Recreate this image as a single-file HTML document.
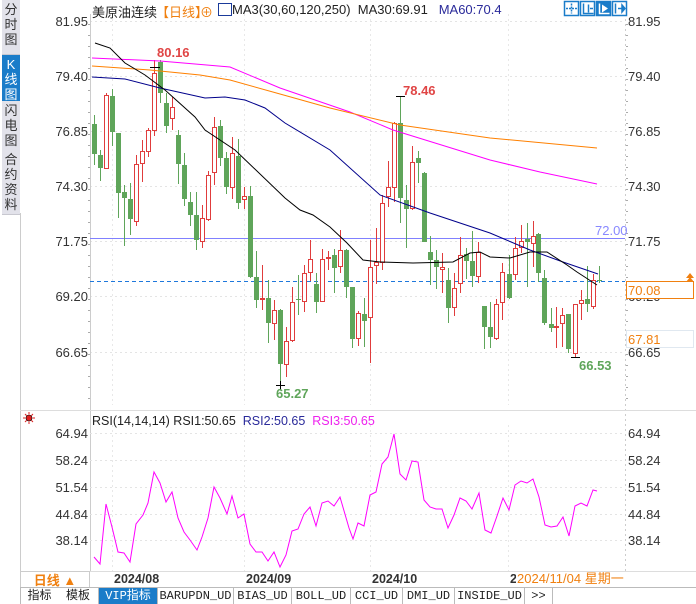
<!DOCTYPE html>
<html><head><meta charset="utf-8"><style>
body{margin:0;width:696px;height:604px;overflow:hidden;background:#fff;font-family:"Liberation Sans","Noto Sans CJK SC",sans-serif;position:relative}
.a{position:absolute;white-space:nowrap}
.side{position:absolute;left:2px;width:18px;background:#e2e2ea;color:#333;font-size:13px;line-height:15px;text-align:center;border-bottom:1px solid #c8c8d0}
.tab{position:absolute;top:588px;height:16px;border-right:1px solid #bbb;font:12px "Liberation Mono","Noto Sans CJK SC",monospace;line-height:16px;text-align:center;color:#222;background:#fff}
</style></head><body>
<div class="side" style="top:0;height:52px;padding-top:2px">分<br>时<br>图</div>
<div class="side" style="top:55px;height:44px;background:#1a7cc9;color:#fff;padding-top:2px">K<br>线<br>图</div>
<div class="side" style="top:101px;height:47px;padding-top:2px">闪<br>电<br>图</div>
<div class="side" style="top:150px;height:62px;padding-top:2px">合<br>约<br>资<br>料</div>
<div class="a" style="left:20px;top:213px;width:1px;height:375px;background:#ccc"></div>

<svg class="a" style="left:0;top:0" width="696" height="604" id="s"></svg>

<div class="a" style="left:92px;top:2px;font-size:13px;color:#222">美原油连续</div>
<div class="a" style="left:156px;top:2px;font-size:13px;color:#f08010">【日线】</div>
<div class="a" style="left:200px;top:2px;font-size:13px;color:#f08010">⊕</div>
<div class="a" style="left:218px;top:3px;width:12px;height:11px;border:1px solid #1a3a9a;background:#fff"></div>
<div class="a" style="left:232px;top:2px;font-size:13px;color:#222">MA3(30,60,120,250) &nbsp;MA30:69.91 &nbsp;&nbsp;<span style="color:#2a2a9a">MA60:70.4</span></div>
<div class="a" style="left:92px;top:414px;font-size:12.5px;color:#222">RSI(14,14,14) RSI1:50.65 &nbsp;<span style="color:#2a2a9a">RSI2:50.65</span> &nbsp;<span style="color:#ee22ee">RSI3:50.65</span></div>

<div class="a" style="left:20px;top:571px;width:68px;height:17px;border:1px solid #ccc;color:#f08010;font-weight:bold;font-size:13px;line-height:17px;text-align:center">日线 ▲</div>
<div class="tab" style="left:20px;width:37px;border-left:1px solid #bbb">指标</div>
<div class="tab" style="left:58px;width:40px">模板</div>
<div class="tab" style="left:99px;width:58px;background:#1a7cc9;color:#fff">VIP指标</div>
<div class="tab" style="left:158px;width:75px">BARUPDN_UD</div>
<div class="tab" style="left:234px;width:57px">BIAS_UD</div>
<div class="tab" style="left:292px;width:58px">BOLL_UD</div>
<div class="tab" style="left:351px;width:51px">CCI_UD</div>
<div class="tab" style="left:403px;width:51px">DMI_UD</div>
<div class="tab" style="left:455px;width:69px">INSIDE_UD</div>
<div class="tab" style="left:525px;width:27px">&gt;&gt;</div>
<div class="a" style="left:20px;top:587px;width:676px;height:1px;background:#bbb"></div>

<script>
var s=document.getElementById('s'),h='';
function L(x1,y1,x2,y2,c,w,d){h+='<line x1="'+x1+'" y1="'+y1+'" x2="'+x2+'" y2="'+y2+'" stroke="'+c+'" stroke-width="'+(w||1)+'"'+(d?' stroke-dasharray="'+d+'"':'')+'/>';}
function T(x,y,t,c,sz,extra){h+='<text x="'+x+'" y="'+y+'" fill="'+c+'" font-size="'+(sz||13)+'" font-family="Liberation Sans, Noto Sans CJK SC, sans-serif" '+(extra||'')+'>'+t+'</text>';}
function P(pts,c,w){h+='<polyline fill="none" stroke="'+c+'" stroke-width="'+(w||1)+'" points="'+pts+'"/>';}
var py=[21,76,131,186,241,296,352],pl=['81.95','79.40','76.85','74.30','71.75','69.20','66.65'];
py.forEach(function(y,i){L(90,y+.5,625,y+.5,'#e4e4e4',1,'2,3');T(88,y+5,pl[i],'#333',13,'text-anchor="end"');T(628,y+5,pl[i],'#333',13);});
[112,244,370,508].forEach(function(x){L(x+.5,14,x+.5,405,'#e8e8e8',1,'2,3');L(x+.5,425,x+.5,572,'#e8e8e8',1,'2,3');});
L(90.5,14,90.5,572,'#ccc');L(625.5,14,625.5,572,'#ccc',1,'2,3');
for(var y=24;y<405;y+=11){L(88,y+.5,90,y+.5,'#aaa');L(626,y+.5,628,y+.5,'#aaa');}
L(20,410.5,696,410.5,'#ddd');
var ry=[433,460,487,514,540],rl=['64.94','58.24','51.54','44.84','38.14'];
ry.forEach(function(y,i){L(90,y+.5,625,y+.5,'#e4e4e4',1,'2,3');T(88,y+5,rl[i],'#333',13,'text-anchor="end"');T(628,y+5,rl[i],'#333',13);});
L(20,571.5,696,571.5,'#ddd');
L(90,238.5,625,238.5,'#8080ff');T(595,235,'72.00','#8888ff',13);
L(90,281.5,625,281.5,'#1e78dc',1,'4,3');
var C=[[94,124,154,115,165,0],[100,155,168,150,181,0],[106,168,95,93,168,1],[112,96,132,89,146,0],[118,133,193,133,218,0],[124,192,198,185,246,0],[130,199,219,183,235,0],[136,221,164,155,226,1],[142,163,151,140,182,1],[148,151,130,128,157,1],[154,130,73,60,136,1],[160,62,93,60,103,0],[166,103,126,93,133,0],[172,118,107,97,130,1],[178,135,164,130,184,0],[184,165,199,153,206,0],[190,202,215,192,226,0],[196,215,240,192,250,0],[202,241,218,205,248,1],[208,219,175,171,221,1],[214,172,127,117,185,1],[220,126,158,120,166,0],[226,158,187,152,194,0],[232,187,153,137,199,1],[238,156,203,139,209,0],[244,199,196,187,209,1],[250,196,277,186,278,0],[256,277,300,251,308,0],[262,299,298,265,310,1],[268,298,323,280,343,0],[274,323,310,300,340,1],[280,310,364,309,385,0],[286,364,341,327,377,1],[292,340,302,287,342,1],[298,299,300,275,315,0],[304,301,273,265,312,1],[310,272,259,240,281,1],[316,284,302,273,313,0],[322,301,259,249,301,1],[328,258,257,251,270,1],[334,255,268,249,293,0],[340,266,250,230,273,1],[346,250,287,249,298,0],[352,287,339,287,348,0],[358,338,313,311,346,1],[364,314,321,298,347,0],[370,317,267,240,363,1],[376,265,262,228,284,1],[382,262,203,195,270,1],[388,196,187,161,207,1],[394,187,123,122,202,1],[400,123,198,97,223,0],[406,200,209,185,248,0],[412,208,162,146,210,1],[418,158,163,151,183,0],[424,173,242,172,242,0],[430,252,260,236,285,0],[436,260,267,250,289,0],[442,269,267,253,293,1],[448,280,308,268,323,0],[454,307,288,273,316,1],[460,283,255,237,293,1],[466,254,261,248,279,0],[472,261,276,231,287,0],[478,276,252,242,283,1],[484,306,327,306,349,0],[490,327,337,302,348,0],[496,338,304,299,340,1],[502,302,272,263,320,1],[509,274,298,255,299,0],[515,274,248,237,280,1],[521,247,241,225,253,1],[527,239,242,223,287,0],[533,243,236,221,267,1],[538,234,273,233,282,0],[544,278,323,270,325,0],[551,324,328,308,332,0],[556,327,326,307,348,1],[562,323,315,308,347,1],[568,314,349,314,353,0],[575,353,304,304,358,1],[581,303,300,290,320,1],[587,299,304,266,312,0],[593,306,280,274,309,1],[599,280,281,266,283,0]];
C.forEach(function(k){var x=k[0],t=Math.min(k[1],k[2]),b=Math.max(k[1],k[2]),col=k[5]?'#e03c3c':'#5fa55a';
 if(k[5]){L(x+.5,k[3],x+.5,t,col);L(x+.5,b,x+.5,k[4],col);h+='<rect x="'+(x-1.5)+'" y="'+(t+.5)+'" width="4" height="'+Math.max(b-t,1)+'" fill="#fff" stroke="'+col+'"/>';}
 else{L(x+.5,k[3],x+.5,k[4],col);h+='<rect x="'+(x-2)+'" y="'+t+'" width="5" height="'+Math.max(b-t,1)+'" fill="'+col+'"/>';}});
P('92,58 160,61 230,67 280,88 350,112 393,130 490,160 540,172 597,184','#ff00ff');
P('92,66 150,70 200,75 230,80 280,94 330,108 400,125 490,138 597,148','#ff8000');
P('92,77 125,79 160,88 205,98 225,97 245,100 265,108 285,123 330,150 380,195 430,213 490,233 530,250 563,262 598,274','#00008b');
P('95,43 110,48 125,63 145,75 165,90 195,117 205,130 235,150 285,198 300,210 313,215 330,227 347,243 363,260 380,262 413,263 453,262 470,253 480,252 490,257 510,258 530,252 547,252 567,265 577,272 597,285','#000');
L(150,67.5,160,67.5,'#000');T(157,57,'80.16','#e04545',13,'font-weight="bold"');
L(396,96.5,405,96.5,'#000');T(403,95,'78.46','#e04545',13,'font-weight="bold"');
L(276,385.5,285,385.5,'#000');L(280.5,381,280.5,390,'#000');T(276,398,'65.27','#5fa55a',13,'font-weight="bold"');
L(571,357.5,580,357.5,'#000');T(579,370,'66.53','#5fa55a',13,'font-weight="bold"');
h+='<rect x="626.5" y="281.5" width="67" height="17" fill="#fff" stroke="#f08010"/>';T(628,295,'70.08','#f08010',13);
h+='<path d="M686 278 L690 273 L694 278 Z M686 282 L690 277 L694 282 Z" fill="#f08010"/>';
h+='<rect x="626.5" y="330.5" width="67" height="17" fill="#fff" stroke="#e0e8f0"/>';T(628,344,'67.81','#f08010',13);
[564,580,596,612].forEach(function(x,i){h+='<rect x="'+(x+.5)+'" y="1.5" width="14" height="14" fill="'+(i==2?'#1a7cc9':'#fff')+'" stroke="#1a7cc9" stroke-width="1.5"/>';});
h+='<path d="M571.5 3.5v10M566 8.5h11" stroke="#1a7cc9" stroke-width="1.5" stroke-dasharray="2,1"/><path d="M583.5 3.5v10h10M588.5 4.5v8M590 8.5h3" stroke="#1a7cc9" stroke-width="1.5" fill="none"/><path d="M599.5 3.5v10h10" stroke="#fff" stroke-width="1.5" fill="none"/><path d="M602 4.5l6 4-6 4z" fill="#fff"/><path d="M615.5 3.5v10M618 8.5h5M622 5l3 3.5-3 3.5z" stroke="#1a7cc9" stroke-width="1.5" fill="#1a7cc9"/>';
P('94,557 100,564 106,504 112,527 118,552 124,553 130,562 136,524 143,515 148,503 154,472 160,483 166,502 172,492 178,518 184,532 190,540 197,550 202,537 208,518 214,487 220,498 227,514 232,496 238,518 244,514 250,544 256,552 262,552 268,561 274,552 280,567 286,555 292,531 298,529 304,514 310,507 316,526 322,503 328,501 334,506 340,497 349,528 353,539 358,523 364,526 370,495 376,492 382,464 388,457 394,434 400,474 406,480 412,461 418,462 424,500 430,507 436,509 442,509 448,528 454,515 460,498 466,501 472,509 479,493 485,530 491,533 497,516 503,498 509,510 515,485 521,481 527,483 533,479 539,497 545,525 551,527 557,526 563,517 569,536 575,506 581,503 587,506 593,490 597,491','#ff00ff');
h+='<circle cx="29" cy="418" r="3" fill="#e02020" stroke="#000" stroke-width=".6"/>';
[[0,-6],[0,6],[-6,0],[6,0],[-4,-4],[4,4],[-4,4],[4,-4]].forEach(function(d){L(29+d[0]*.6,418+d[1]*.6,29+d[0],418+d[1],'#e02020');});
T(114,583,'2024/08','#333',12.5,'font-weight="bold"');T(246,583,'2024/09','#333',12.5,'font-weight="bold"');T(372,583,'2024/10','#333',12.5,'font-weight="bold"');T(510,583,'2','#333',12.5,'font-weight="bold"');
h+='<rect x="516" y="572" width="109" height="15" fill="#fff"/>';T(517,583,'2024/11/04 星期一','#f08010',13);
s.innerHTML=h;
</script>
</body></html>
